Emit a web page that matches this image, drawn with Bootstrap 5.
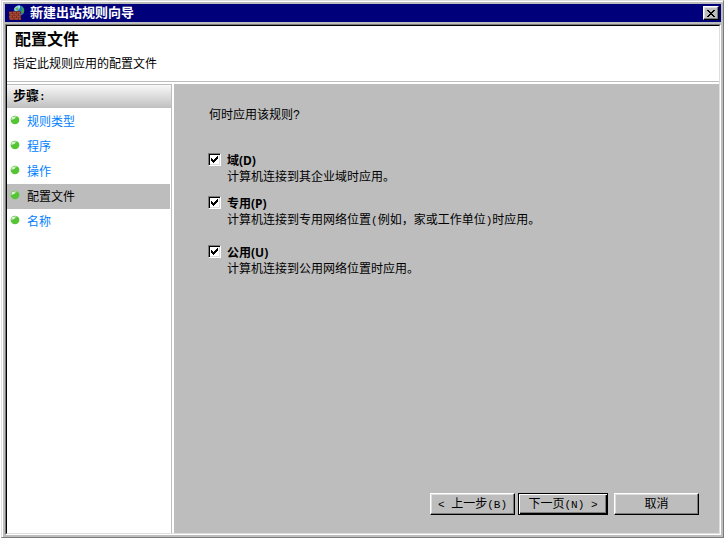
<!DOCTYPE html>
<html lang="zh-CN">
<head>
<meta charset="utf-8">
<meta name="viewport" content="width=device-width, initial-scale=1">
<title>新建出站规则向导</title>
<link href="https://cdn.jsdelivr.net/npm/bootstrap@5.3.0/dist/css/bootstrap.min.css" rel="stylesheet">
<style>
:root { --face: #bdbdbd; --shade: #7b7b7b; --light: #dedede; --navy: #00007b; --link: #0080ff; }
body { font: 12px/16px "Liberation Sans", "Noto Sans CJK SC", sans-serif; color: #000; background: #fff; }
.dialog { background: var(--face); border: 1px solid; border-color: var(--light) var(--shade) var(--shade) var(--light);
  box-shadow: inset 1px 1px #fff; padding: 3px 2px 2px 3px; margin-left: 1px; }
.titlebar { background: var(--navy); color: #fff; height: 18px; padding: 0 2px 0 4px; }
.titlebar h1 { font-size: 13px; line-height: 18px; margin-left: 5px; }
.bevel { background: var(--face); border: 1px solid; border-color: #fff #000 #000 #fff; border-radius: 0; color: #000;
  box-shadow: inset -1px -1px var(--shade), inset 1px 1px var(--light); }
.closer { width: 16px; height: 14px; }
.client { border: 1px solid; border-color: var(--shade) #fff #fff var(--shade); margin-top: 2px; }
.well { border: 1px solid; border-color: #000 var(--light) var(--light) #000; background: #fff; }
.heading { padding: 4px 6px 7px; border-bottom: 1px solid var(--face); margin-bottom: 2px; }
.heading h2 { font-size: 16px; line-height: 20px; padding-left: 2px; }
.heading p { line-height: 20px; }
.steps { width: 165px; border-right: 1px solid var(--face); border-top: 1px solid var(--face); }
.steps h3 { font-size: 13px; line-height: 22px; padding-left: 6px; background: linear-gradient(#f8f8f8, #c0c0c0); margin: 0 0 1px; }
.step { height: 25px; padding-left: 3px; gap: 7px; margin-right: 1px; color: var(--link); text-decoration: none; }
.step svg { margin-bottom: 3px; }
.step.active { background: var(--face); color: #000; }
.pane { background: var(--face); margin-left: 2px; padding: 23px 20px 18px 34px; }
.question { margin-bottom: 29px; padding-left: 1px; }
.choice { display: grid; grid-template-columns: 13px 1fr; column-gap: 6px; line-height: 17px; }
.choice label { font-family: "Noto Sans", "Noto Sans CJK SC", sans-serif; font-weight: 700; justify-self: start; }
.choice p { grid-column: 2; margin: 0; }
.tick { appearance: none; width: 13px; height: 13px; margin: 1px 0 0; border: 1px solid; border-color: var(--shade) #fff #fff var(--shade);
  box-shadow: inset 1px 1px #000, inset -1px -1px var(--light); background: #fff; }
.tick:checked { background: #fff url("data:image/svg+xml,%3Csvg xmlns='http://www.w3.org/2000/svg' viewBox='0 0 11 11' shape-rendering='crispEdges'%3E%3Cpath d='M2 4h1v1h1v1h1v-1h1v-1h1v-1h1v-1h1v3h-1v1h-1v1h-1v1h-1v1h-1v-1h-1v-1h-1z'/%3E%3C/svg%3E") center/11px 11px no-repeat; }
.gap-near { margin-top: 9px; }
.gap-far { margin-top: 14px; }
.action { width: 85px; height: 22px; line-height: 18px; padding: 0; }
.action.primary { width: 90px; margin: 0 6px 0 3px; outline: 1px solid #000; outline-offset: -1px; border-color: #000;
  box-shadow: inset 1px 1px #fff, inset -1px -1px #000, inset -2px -2px var(--shade); }
.half { font-family: "Liberation Mono", monospace; font-size: 11px; white-space: pre; }
</style>
<script src="https://cdn.jsdelivr.net/npm/bootstrap@5.3.0/dist/js/bootstrap.bundle.min.js" defer></script>
</head>
<body>
<svg class="d-none">
  <defs>
    <symbol id="ball" viewBox="0 0 10 10"><ellipse cx="5" cy="5" rx="4.4" ry="4.2" fill="#55c535"/><path d="M.8 5A4.200 4.200 0 0 1 7.500 1.800Q6 2.500 4.500 3.800T.8 5z" fill="#a5dc98"/><ellipse cx="3.300" cy="2.900" rx="1.500" ry="1" fill="#e4f6e0"/></symbol>
  </defs>
</svg>
<main class="dialog min-vh-100 d-flex flex-column">
  <header class="titlebar d-flex align-items-center">
    <svg width="16" height="16" viewBox="0 0 16 16" aria-hidden="true">
      <circle cx="10" cy="5.500" r="5.300" fill="#2474c8"/>
      <path d="M5 4Q7 .2 11 .5L11 3 9 5 7 6.500z" fill="#a8dcf5"/>
      <path d="M12 1 14 2.500 15.200 5 14.500 8.500 13 8 12.500 6 13 4z" fill="#3da53a"/>
      <path d="M6 3.500 9 2 9.500 4 8 6z" fill="#63bd55"/>
      <path d="M0 6.500 11 6l1 1v8H1l-1-1z" fill="#7a2a1c"/>
      <path d="M0 7h3v1.500H0zM4 7h3v1.500H4zM8 7h3v1.500H8zM1 9h3.500v1.500H1zM5.500 9H9v1.500H5.500zM10 9h2v1.500h-2zM0 11h3v1.500H0zM4 11h3v1.500H4zM8 11h3v1.500H8zM1 13h3.500v1.500H1zM5.500 13H9v1.500H5.500zM10 13h2v1.500h-2z" fill="#a54a36"/>
    </svg>
    <h1 class="fw-bold mb-0 flex-grow-1">新建出站规则向导</h1>
    <button type="button" class="bevel closer p-0 d-flex align-items-center justify-content-center" aria-label="关闭">
      <svg width="8" height="7" viewBox="0 0 8 7" shape-rendering="crispEdges" aria-hidden="true"><path d="M0 0h2v1h1v1h2v-1h1v-1h2v1h-1v1h-1v1h-1v1h1v1h1v1h1v1h-2v-1h-1v-1h-2v1h-1v1h-2v-1h1v-1h1v-1h1v-1h-1v-1h-1v-1h-1z"/></svg>
    </button>
  </header>
  <div class="client flex-grow-1 d-flex flex-column">
    <div class="well flex-grow-1 d-flex flex-column">
      <div class="heading">
        <h2 class="fw-bold mb-1">配置文件</h2>
        <p class="mb-0">指定此规则应用的配置文件</p>
      </div>
      <div class="flex-grow-1 d-flex">
        <nav class="steps flex-shrink-0" aria-label="步骤">
          <h3 class="fw-bold">步骤<span class="half">:</span></h3>
          <a href="#type" class="step d-flex align-items-center"><svg width="10" height="10"><use href="#ball"/></svg>规则类型</a>
          <a href="#program" class="step d-flex align-items-center"><svg width="10" height="10"><use href="#ball"/></svg>程序</a>
          <a href="#operation" class="step d-flex align-items-center"><svg width="10" height="10"><use href="#ball"/></svg>操作</a>
          <a href="#profile" class="step active d-flex align-items-center" aria-current="step"><svg width="10" height="10"><use href="#ball"/></svg>配置文件</a>
          <a href="#name" class="step d-flex align-items-center"><svg width="10" height="10"><use href="#ball"/></svg>名称</a>
        </nav>
        <form class="pane flex-grow-1 d-flex flex-column">
          <p class="question">何时应用该规则?</p>
          <div class="choice">
            <input class="tick" type="checkbox" id="domain" checked>
            <label for="domain">域(D)</label>
            <p>计算机连接到其企业域时应用。</p>
          </div>
          <div class="choice gap-near">
            <input class="tick" type="checkbox" id="private" checked>
            <label for="private">专用(P)</label>
            <p>计算机连接到专用网络位置<span class="half">(</span>例如，家或工作单位<span class="half">)</span>时应用。</p>
          </div>
          <div class="choice gap-far">
            <input class="tick" type="checkbox" id="public" checked>
            <label for="public">公用(U)</label>
            <p>计算机连接到公用网络位置时应用。</p>
          </div>
          <div class="d-flex justify-content-end mt-auto">
            <button type="button" class="bevel action"><span class="half">&lt; </span>上一步<span class="half">(B)</span></button>
            <button type="button" class="bevel action primary">下一页<span class="half">(N) &gt;</span></button>
            <button type="button" class="bevel action">取消</button>
          </div>
        </form>
      </div>
    </div>
  </div>
</main>
</body>
</html>
